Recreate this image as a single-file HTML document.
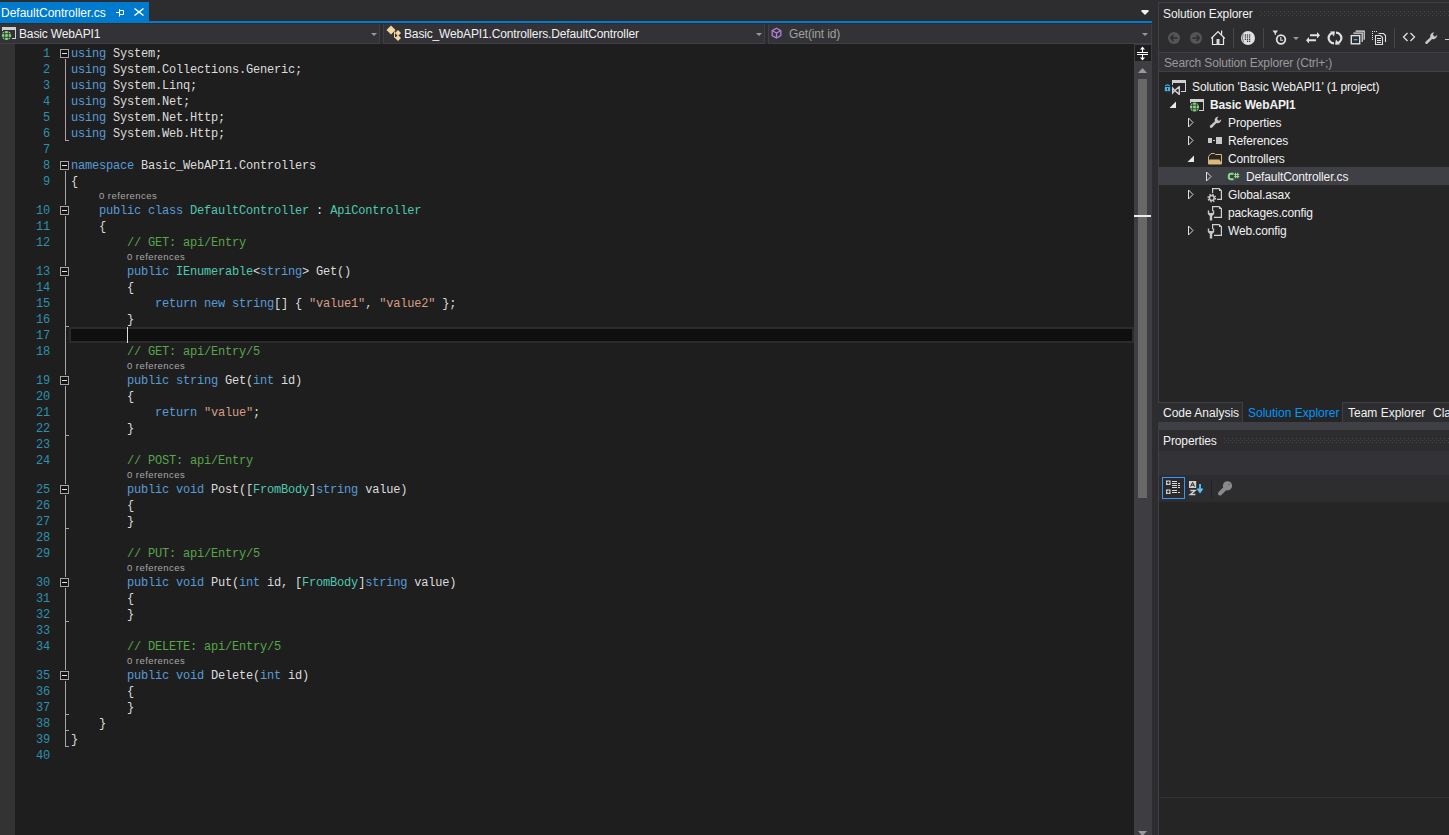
<!DOCTYPE html>
<html><head><meta charset="utf-8">
<style>
*{margin:0;padding:0;box-sizing:border-box}
html,body{width:1449px;height:835px;overflow:hidden;background:#2D2D30;font-family:"Liberation Sans",sans-serif;font-size:12px;color:#F1F1F1}
.abs{position:absolute}
b{font-weight:normal}
/* tab strip */
#tab{position:absolute;left:0;top:2px;width:149px;height:19px;background:#007ACC;color:#fff;font-size:12px;line-height:23px;padding-left:1px;white-space:nowrap}
#tabline{position:absolute;left:0;top:21px;width:1152px;height:2px;background:#007ACC}
/* nav bar */
#nav{position:absolute;left:0;top:23px;width:1152px;height:21px;background:#2D2D30}
.combo{position:absolute;top:1px;height:20px;background:#333337;border:1px solid #3F3F46;border-top-color:#333337;font-size:12px;letter-spacing:-0.15px;line-height:18px;color:#F1F1F1;white-space:nowrap}
.dd{position:absolute;top:8px;width:0;height:0;border-left:4px solid transparent;border-right:4px solid transparent;border-top:4px solid #999}
/* editor */
#editor{position:absolute;left:0;top:44px;width:1134px;height:791px;background:#1E1E1E}
#lmargin{position:absolute;left:0;top:44px;width:15px;height:791px;background:#333333}
.ln{position:absolute;left:20px;width:30px;text-align:right;height:16px;line-height:16px;margin-top:1px;font-family:"Liberation Mono",monospace;font-size:12px;letter-spacing:-0.2px;color:#2B91AF}
.cl{position:absolute;left:71px;height:16px;line-height:16px;margin-top:1px;font-family:"Liberation Mono",monospace;font-size:12px;letter-spacing:-0.2px;color:#DCDCDC;white-space:nowrap}
.lens{position:absolute;height:13px;line-height:13px;font-size:9.5px;letter-spacing:0.45px;color:#A8A8A8;white-space:nowrap;margin-top:0px}
.box{position:absolute;left:60px;width:9px;height:9px;border:1px solid #A5A5A5;background:#141414;box-shadow:0 0 0 1px #1E1E1E}
.box:after{content:"";position:absolute;left:1px;top:3px;width:5px;height:1px;background:#E0E0E0}
.vl{position:absolute;left:65px;width:1px;background:#A5A5A5}
.tick{position:absolute;left:65px;width:4px;height:1px;background:#A5A5A5}
#curline{position:absolute;left:69px;width:1065px;height:16px;border:2px solid #2B2B2B;background:#0F0F0F}
#caret{position:absolute;left:127px;width:1px;height:16px;background:#DCDCDC}
/* scrollbar */
#vscroll{position:absolute;left:1134px;top:44px;width:18px;height:791px;background:#3E3E42}
#split{position:absolute;left:1135px;top:45px;width:16px;height:16px;background:#1E1E1E}
#thumb{position:absolute;left:1138px;top:79px;width:9px;height:419px;background:#686868}
#marker{position:absolute;left:1134px;top:215px;width:17px;height:2px;background:#EEEEEE}
/* solution explorer */
#se{position:absolute;left:1158px;top:2px;width:291px;height:398px;background:#252526;border-left:1px solid #3F3F46;border-top:1px solid #3F3F46}
#sehead{position:absolute;left:1159px;top:3px;width:290px;height:22px;background:#2D2D30}
#setool{position:absolute;left:1159px;top:25px;width:290px;height:27px;background:#2D2D30}
#search{position:absolute;left:1159px;top:52px;width:290px;height:20px;background:#333337;border-top:1px solid #3F3F46;border-bottom:1px solid #3F3F46;color:#999;font-size:12px;line-height:20px;padding-left:5px;letter-spacing:-0.15px;white-space:nowrap}
.ttl{position:absolute;font-size:12px;letter-spacing:-0.1px;color:#F1F1F1;white-space:nowrap}
.grip{position:absolute;height:6px;background-image:radial-gradient(circle,#46464A 0.8px,transparent 0.9px);background-size:4px 4px}
.tree{position:absolute;height:18px;line-height:18px;font-size:12px;letter-spacing:-0.12px;color:#F1F1F1;white-space:nowrap}
#selrow{position:absolute;left:1159px;top:167px;width:290px;height:18px;background:#3F3F46}
/* bottom tabs */
#btabs{position:absolute;left:1158px;top:400px;width:291px;height:30px;background:#252526;border-left:1px solid #3F3F46}
.btab{position:absolute;top:403px;height:20px;line-height:20px;font-size:12px;color:#F1F1F1;white-space:nowrap}
/* properties */
#props{position:absolute;left:1158px;top:430px;width:291px;height:405px;background:#252526;border-left:1px solid #3F3F46}
#prophead{position:absolute;left:1159px;top:430px;width:290px;height:22px;background:#2D2D30}
#propcombo{position:absolute;left:1159px;top:451px;width:290px;height:24px;background:#333337}
#proptool{position:absolute;left:1159px;top:475px;width:290px;height:27px;background:#2D2D30}
</style></head><body>
<div id="tab">DefaultController.cs</div>
<div id="tabline"></div>
<div class="abs" style="left:1141px;top:10px;width:0;height:0;border-left:4px solid transparent;border-right:4px solid transparent;border-top:4px solid #F1F1F1"></div>

<div id="nav"></div>
<div class="combo" style="left:0;top:24px;width:380px;border-left:0"><span style="position:absolute;left:19px;top:0">Basic WebAPI1</span></div>
<div class="combo" style="left:383px;top:24px;width:382px"><span style="position:absolute;left:20px;top:0">Basic_WebAPI1.Controllers.DefaultController</span></div>
<div class="combo" style="left:768px;top:24px;width:384px"><span style="position:absolute;left:20px;top:0;color:#A0A0A0">Get(int id)</span></div>

<div id="editor"></div>
<div id="lmargin"></div>
<div id="curline" style="top:327px"></div>
<div id="caret" style="top:327px"></div>
<div class="vl" style="top:58px;height:83px"></div>
<div class="vl" style="top:170px;height:577px"></div>
<div class="tick" style="top:140px"></div>
<div class="tick" style="top:326px"></div>
<div class="tick" style="top:435px"></div>
<div class="tick" style="top:528px"></div>
<div class="tick" style="top:621px"></div>
<div class="tick" style="top:714px"></div>
<div class="tick" style="top:730px"></div>
<div class="tick" style="top:746px"></div>
<div class="box" style="top:49px"></div>
<div class="box" style="top:161px"></div>
<div class="box" style="top:206px"></div>
<div class="box" style="top:267px"></div>
<div class="box" style="top:376px"></div>
<div class="box" style="top:485px"></div>
<div class="box" style="top:578px"></div>
<div class="box" style="top:671px"></div>
<div class="ln" style="top:45px">1</div>
<div class="cl" style="top:45px"><b style="color:#569CD6">using</b> System;</div>
<div class="ln" style="top:61px">2</div>
<div class="cl" style="top:61px"><b style="color:#569CD6">using</b> System.Collections.Generic;</div>
<div class="ln" style="top:77px">3</div>
<div class="cl" style="top:77px"><b style="color:#569CD6">using</b> System.Linq;</div>
<div class="ln" style="top:93px">4</div>
<div class="cl" style="top:93px"><b style="color:#569CD6">using</b> System.Net;</div>
<div class="ln" style="top:109px">5</div>
<div class="cl" style="top:109px"><b style="color:#569CD6">using</b> System.Net.Http;</div>
<div class="ln" style="top:125px">6</div>
<div class="cl" style="top:125px"><b style="color:#569CD6">using</b> System.Web.Http;</div>
<div class="ln" style="top:141px">7</div>
<div class="ln" style="top:157px">8</div>
<div class="cl" style="top:157px"><b style="color:#569CD6">namespace</b> Basic_WebAPI1.Controllers</div>
<div class="ln" style="top:173px">9</div>
<div class="cl" style="top:173px">{</div>
<div class="lens" style="top:189px;left:99px">0 references</div>
<div class="ln" style="top:202px">10</div>
<div class="cl" style="top:202px">&nbsp;&nbsp;&nbsp;&nbsp;<b style="color:#569CD6">public</b> <b style="color:#569CD6">class</b> <b style="color:#4EC9B0">DefaultController</b> : <b style="color:#4EC9B0">ApiController</b></div>
<div class="ln" style="top:218px">11</div>
<div class="cl" style="top:218px">&nbsp;&nbsp;&nbsp;&nbsp;{</div>
<div class="ln" style="top:234px">12</div>
<div class="cl" style="top:234px">&nbsp;&nbsp;&nbsp;&nbsp;&nbsp;&nbsp;&nbsp;&nbsp;<b style="color:#57A64A">// GET: api/Entry</b></div>
<div class="lens" style="top:250px;left:127px">0 references</div>
<div class="ln" style="top:263px">13</div>
<div class="cl" style="top:263px">&nbsp;&nbsp;&nbsp;&nbsp;&nbsp;&nbsp;&nbsp;&nbsp;<b style="color:#569CD6">public</b> <b style="color:#4EC9B0">IEnumerable</b>&lt;<b style="color:#569CD6">string</b>&gt; Get()</div>
<div class="ln" style="top:279px">14</div>
<div class="cl" style="top:279px">&nbsp;&nbsp;&nbsp;&nbsp;&nbsp;&nbsp;&nbsp;&nbsp;{</div>
<div class="ln" style="top:295px">15</div>
<div class="cl" style="top:295px">&nbsp;&nbsp;&nbsp;&nbsp;&nbsp;&nbsp;&nbsp;&nbsp;&nbsp;&nbsp;&nbsp;&nbsp;<b style="color:#569CD6">return</b> <b style="color:#569CD6">new</b> <b style="color:#569CD6">string</b>[] { <b style="color:#D69D85">"value1"</b>, <b style="color:#D69D85">"value2"</b> };</div>
<div class="ln" style="top:311px">16</div>
<div class="cl" style="top:311px">&nbsp;&nbsp;&nbsp;&nbsp;&nbsp;&nbsp;&nbsp;&nbsp;}</div>
<div class="ln" style="top:327px">17</div>
<div class="ln" style="top:343px">18</div>
<div class="cl" style="top:343px">&nbsp;&nbsp;&nbsp;&nbsp;&nbsp;&nbsp;&nbsp;&nbsp;<b style="color:#57A64A">// GET: api/Entry/5</b></div>
<div class="lens" style="top:359px;left:127px">0 references</div>
<div class="ln" style="top:372px">19</div>
<div class="cl" style="top:372px">&nbsp;&nbsp;&nbsp;&nbsp;&nbsp;&nbsp;&nbsp;&nbsp;<b style="color:#569CD6">public</b> <b style="color:#569CD6">string</b> Get(<b style="color:#569CD6">int</b> id)</div>
<div class="ln" style="top:388px">20</div>
<div class="cl" style="top:388px">&nbsp;&nbsp;&nbsp;&nbsp;&nbsp;&nbsp;&nbsp;&nbsp;{</div>
<div class="ln" style="top:404px">21</div>
<div class="cl" style="top:404px">&nbsp;&nbsp;&nbsp;&nbsp;&nbsp;&nbsp;&nbsp;&nbsp;&nbsp;&nbsp;&nbsp;&nbsp;<b style="color:#569CD6">return</b> <b style="color:#D69D85">"value"</b>;</div>
<div class="ln" style="top:420px">22</div>
<div class="cl" style="top:420px">&nbsp;&nbsp;&nbsp;&nbsp;&nbsp;&nbsp;&nbsp;&nbsp;}</div>
<div class="ln" style="top:436px">23</div>
<div class="ln" style="top:452px">24</div>
<div class="cl" style="top:452px">&nbsp;&nbsp;&nbsp;&nbsp;&nbsp;&nbsp;&nbsp;&nbsp;<b style="color:#57A64A">// POST: api/Entry</b></div>
<div class="lens" style="top:468px;left:127px">0 references</div>
<div class="ln" style="top:481px">25</div>
<div class="cl" style="top:481px">&nbsp;&nbsp;&nbsp;&nbsp;&nbsp;&nbsp;&nbsp;&nbsp;<b style="color:#569CD6">public</b> <b style="color:#569CD6">void</b> Post([<b style="color:#4EC9B0">FromBody</b>]<b style="color:#569CD6">string</b> value)</div>
<div class="ln" style="top:497px">26</div>
<div class="cl" style="top:497px">&nbsp;&nbsp;&nbsp;&nbsp;&nbsp;&nbsp;&nbsp;&nbsp;{</div>
<div class="ln" style="top:513px">27</div>
<div class="cl" style="top:513px">&nbsp;&nbsp;&nbsp;&nbsp;&nbsp;&nbsp;&nbsp;&nbsp;}</div>
<div class="ln" style="top:529px">28</div>
<div class="ln" style="top:545px">29</div>
<div class="cl" style="top:545px">&nbsp;&nbsp;&nbsp;&nbsp;&nbsp;&nbsp;&nbsp;&nbsp;<b style="color:#57A64A">// PUT: api/Entry/5</b></div>
<div class="lens" style="top:561px;left:127px">0 references</div>
<div class="ln" style="top:574px">30</div>
<div class="cl" style="top:574px">&nbsp;&nbsp;&nbsp;&nbsp;&nbsp;&nbsp;&nbsp;&nbsp;<b style="color:#569CD6">public</b> <b style="color:#569CD6">void</b> Put(<b style="color:#569CD6">int</b> id, [<b style="color:#4EC9B0">FromBody</b>]<b style="color:#569CD6">string</b> value)</div>
<div class="ln" style="top:590px">31</div>
<div class="cl" style="top:590px">&nbsp;&nbsp;&nbsp;&nbsp;&nbsp;&nbsp;&nbsp;&nbsp;{</div>
<div class="ln" style="top:606px">32</div>
<div class="cl" style="top:606px">&nbsp;&nbsp;&nbsp;&nbsp;&nbsp;&nbsp;&nbsp;&nbsp;}</div>
<div class="ln" style="top:622px">33</div>
<div class="ln" style="top:638px">34</div>
<div class="cl" style="top:638px">&nbsp;&nbsp;&nbsp;&nbsp;&nbsp;&nbsp;&nbsp;&nbsp;<b style="color:#57A64A">// DELETE: api/Entry/5</b></div>
<div class="lens" style="top:654px;left:127px">0 references</div>
<div class="ln" style="top:667px">35</div>
<div class="cl" style="top:667px">&nbsp;&nbsp;&nbsp;&nbsp;&nbsp;&nbsp;&nbsp;&nbsp;<b style="color:#569CD6">public</b> <b style="color:#569CD6">void</b> Delete(<b style="color:#569CD6">int</b> id)</div>
<div class="ln" style="top:683px">36</div>
<div class="cl" style="top:683px">&nbsp;&nbsp;&nbsp;&nbsp;&nbsp;&nbsp;&nbsp;&nbsp;{</div>
<div class="ln" style="top:699px">37</div>
<div class="cl" style="top:699px">&nbsp;&nbsp;&nbsp;&nbsp;&nbsp;&nbsp;&nbsp;&nbsp;}</div>
<div class="ln" style="top:715px">38</div>
<div class="cl" style="top:715px">&nbsp;&nbsp;&nbsp;&nbsp;}</div>
<div class="ln" style="top:731px">39</div>
<div class="cl" style="top:731px">}</div>
<div class="ln" style="top:747px">40</div>

<div id="vscroll"></div>
<div id="split"></div>
<div id="thumb"></div>
<div id="marker"></div>

<div id="se"></div>
<div id="sehead"></div>
<div class="ttl" style="left:1163px;top:7px">Solution Explorer</div>
<div id="setool"></div>
<div id="search">Search Solution Explorer (Ctrl+;)</div>
<div id="selrow"></div>
<div class="tree" style="left:1192px;top:78px">Solution 'Basic WebAPI1' (1 project)</div>
<div class="tree" style="left:1210px;top:96px;font-weight:bold">Basic WebAPI1</div>
<div class="tree" style="left:1228px;top:114px">Properties</div>
<div class="tree" style="left:1228px;top:132px">References</div>
<div class="tree" style="left:1228px;top:150px">Controllers</div>
<div class="tree" style="left:1246px;top:168px">DefaultController.cs</div>
<div class="tree" style="left:1228px;top:186px">Global.asax</div>
<div class="tree" style="left:1228px;top:204px">packages.config</div>
<div class="tree" style="left:1228px;top:222px">Web.config</div>

<div id="btabs"></div>
<div class="abs" style="left:1158px;top:402px;width:85px;height:20px;background:#2D2D30;border-top:1px solid #3F3F46;border-right:1px solid #3F3F46"></div>
<div class="abs" style="left:1342px;top:402px;width:107px;height:20px;background:#2D2D30;border-top:1px solid #3F3F46;border-left:1px solid #3F3F46"></div>
<div class="abs" style="left:1158px;top:422px;width:291px;height:8px;background:#3F3F46"></div>
<div class="btab" style="left:1163px">Code Analysis</div>
<div class="btab" style="left:1248px;color:#0097FB">Solution Explorer</div>
<div class="btab" style="left:1348px">Team Explorer</div>
<div class="btab" style="left:1433px">Cla</div>

<div id="props"></div>
<div class="abs" style="left:1159px;top:797px;width:290px;height:1px;background:#333337"></div>
<div id="prophead"></div>
<div class="ttl" style="left:1163px;top:434px">Properties</div>
<div id="propcombo"></div>
<div id="proptool"></div>
<svg class="abs" style="left:0;top:0" width="1449" height="835" viewBox="0 0 1449 835" shape-rendering="geometricPrecision">
<!-- tab pin -->
<g fill="none" stroke="#FFFFFF" stroke-width="1">
<path d="M116 12.5H119.5M119.5 9V16.5M120 10.5H123.5V14.5H120"/>
</g>
<path d="M134.5 8.5L143.5 15.5M143.5 8.5L134.5 15.5" stroke="#FFFFFF" stroke-width="1.5" fill="none"/>
<!-- top right dropdown -->
<path d="M1141 11H1149L1145 15Z" fill="#F1F1F1"/>
<!-- combo arrows -->
<path d="M371 33H377L374 36Z" fill="#999999"/>
<path d="M756 33H762L759 36Z" fill="#999999"/>
<path d="M1142 33H1148L1145 36Z" fill="#999999"/>
<!-- project icon in combo -->
<g>
<rect x="2" y="27" width="14" height="3" fill="#D0D0D0"/>
<rect x="2" y="27" width="1" height="4" fill="#D0D0D0"/>
<rect x="15" y="27" width="1" height="12" fill="#D0D0D0"/>
<rect x="12" y="38" width="4" height="1" fill="#D0D0D0"/>
<circle cx="6.5" cy="35.5" r="5.1" fill="#333337"/><circle cx="6.5" cy="35.5" r="4.6" fill="#8DD48A"/>
<path d="M4.7 31.2V39.8M8.3 31.2V39.8M2.2 33.7H10.8M2.2 37.3H10.8" stroke="#263826" stroke-width="0.85"/>
</g>
<!-- class icon -->
<g fill="#F5D49F">
<path d="M391 25.5L395.5 30L391 34.5L386.5 30Z"/>
<path d="M398 30L401 33L398 36L395 33Z"/>
<path d="M398 35L401 38L398 41L395 38Z"/>
</g>
<path d="M394.5 31.5V37.5H396" stroke="#F5D49F" stroke-width="1" fill="none"/>
<!-- method cube -->
<g fill="none" stroke="#B180D7" stroke-width="1.3">
<path d="M776.5 28.2L780.8 30.6V35.6L776.5 38L772.2 35.6V30.6Z"/>
<path d="M772.6 30.8L776.5 33L780.4 30.8M776.5 33V37.6"/>
</g>
<!-- splitter -->
<g stroke="#FFFFFF" fill="none" stroke-width="1">
<path d="M1137 52.5H1148M1137 54.5H1148M1142.5 47.5V52M1142.5 55V60"/>
</g>
<path d="M1142.5 46.5L1140 49.5H1145Z M1142.5 60.5L1140 57.5H1145Z" fill="#FFFFFF"/>
<!-- scroll arrows -->
<path d="M1138 73H1147L1142.5 68Z" fill="#999999"/>
<path d="M1138 831H1147L1142.5 836Z" fill="#999999"/>
</svg>
<svg class="abs" style="left:0;top:0" width="1449" height="835" viewBox="0 0 1449 835">
<defs>
<pattern id="g1" x="0" y="3" width="4" height="4" patternUnits="userSpaceOnUse"><rect x="0" y="0" width="1" height="1" fill="#46464A"/><rect x="2" y="2" width="1" height="1" fill="#46464A"/></pattern>
<pattern id="g2" x="0" y="2" width="4" height="4" patternUnits="userSpaceOnUse"><rect x="0" y="0" width="1" height="1" fill="#46464A"/><rect x="2" y="2" width="1" height="1" fill="#46464A"/></pattern>
</defs>
<rect x="1260" y="11" width="189" height="5" fill="url(#g1)"/>
<rect x="1224" y="438" width="225" height="5" fill="url(#g2)"/>
<!-- SE toolbar -->
<circle cx="1174" cy="38" r="6" fill="#555555"/>
<path d="M1170.5 38H1177.5M1170.5 38L1173.5 35M1170.5 38L1173.5 41" stroke="#2D2D30" stroke-width="1.6" fill="none"/>
<circle cx="1196" cy="38" r="6" fill="#555555"/>
<path d="M1192.5 38H1199.5M1199.5 38L1196.5 35M1199.5 38L1196.5 41" stroke="#2D2D30" stroke-width="1.6" fill="none"/>
<g stroke="#E8E8E8" stroke-width="1.2" fill="none">
<path d="M1211.2 38.5L1218 31.5L1224.8 38.5M1212.5 37.5V44.5H1223.5V37.5M1221.6 30.5V34.5"/>
</g>
<rect x="1216.5" y="39" width="3" height="5.5" fill="#D8D8D8"/>
<rect x="1233" y="28" width="1" height="20" fill="#46464A"/>
<circle cx="1248" cy="38" r="7" fill="#E0E0E0"/>
<g fill="#2D2D30">
<circle cx="1245.4" cy="35" r="0.75"/><circle cx="1247.5" cy="35" r="0.75"/><circle cx="1249.6" cy="35" r="0.75"/>
<circle cx="1245.4" cy="37.1" r="0.75"/><circle cx="1247.5" cy="37.1" r="0.75"/><circle cx="1249.6" cy="37.1" r="0.75"/>
<circle cx="1245.4" cy="39.2" r="0.75"/><circle cx="1247.5" cy="39.2" r="0.75"/><circle cx="1249.6" cy="39.2" r="0.75"/>
<circle cx="1247.5" cy="41.3" r="0.75"/><circle cx="1249.6" cy="41.3" r="0.75"/>
</g>
<path d="M1243.2 33.5Q1241.7 38 1243.5 42.5" stroke="#2D2D30" stroke-width="0.6" fill="none"/>
<rect x="1263" y="28" width="1" height="20" fill="#46464A"/>
<path d="M1272.5 30.5H1278L1275.8 33.5V35H1274.8V33.5Z" fill="#E0E0E0"/>
<circle cx="1281" cy="39.5" r="4.3" stroke="#E0E0E0" stroke-width="1.8" fill="none"/>
<path d="M1280.8 37V40.2H1283" stroke="#E0E0E0" stroke-width="1.1" fill="none"/>
<path d="M1293 37H1299L1296 40Z" fill="#999999"/>
<g fill="#E0E0E0">
<path d="M1310 34.2H1317V32L1320 35.2L1317 38.4V36.2H1310Z"/>
<path d="M1316 39.2H1309V37L1306 40.2L1309 43.4V41.2H1316Z"/>
</g>
<g stroke="#E0E0E0" stroke-width="2.2" fill="none">
<path d="M1334 32.6A5.2 5.2 0 0 0 1334 43.4"/>
<path d="M1336 43.4A5.2 5.2 0 0 0 1336 32.6"/>
</g>
<path d="M1330 31.5L1335 31.5L1334 36.5Z M1340 44.5L1335 44.5L1336 39.5Z" fill="#E0E0E0"/>
<g stroke="#E0E0E0" fill="none" stroke-width="1.2">
<rect x="1351.3" y="35.6" width="8.4" height="8.2" stroke-width="1.4"/>
<path d="M1353.4 33.2H1362.2V42M1355.6 31.2H1364.2V39.8"/>
</g>
<rect x="1353.8" y="39" width="3.6" height="1.3" fill="#55AAFF"/>
<g fill="#E0E0E0">
<rect x="1372" y="31" width="1" height="1"/><rect x="1374" y="31" width="1" height="1"/><rect x="1376" y="31" width="1" height="1"/>
<rect x="1372" y="33" width="1" height="1"/><rect x="1372" y="35" width="1" height="1"/><rect x="1372" y="37" width="1" height="1"/><rect x="1372" y="39" width="1" height="1"/>
</g>
<g stroke="#E0E0E0" fill="none" stroke-width="1.1">
<path d="M1375.5 35.5H1380.5L1382.5 37.5V44.5H1375.5Z"/>
<path d="M1378.5 33.5H1383.5L1385.5 35.5V42"/>
<path d="M1377 38.5H1381M1377 40.5H1381M1377 42.5H1381"/>
</g>
<rect x="1394" y="28" width="1" height="20" fill="#46464A"/>
<path d="M1407.5 33L1403.5 37L1407.5 41M1410.5 33L1414.5 37L1410.5 41" stroke="#E0E0E0" stroke-width="1.3" fill="none"/>
<path d="M1434.2 32.2A4 4 0 0 0 1430.3 37.2L1425.6 41.7A1.3 1.3 0 0 0 1427.6 43.6L1432.1 39A4 4 0 0 0 1437.2 35L1434.8 36.8L1432.8 34.8Z" fill="#C8C8C8"/>
<rect x="1445" y="39" width="4" height="1" fill="#C8C8C8"/>

<!-- tree icons -->
<!-- solution row -->
<path d="M1165.3 86.2Q1167.5 83.4 1169.7 86.2" stroke="#3BB4F0" stroke-width="1.3" fill="none"/>
<rect x="1164.8" y="87" width="5.4" height="4.2" fill="#3BB4F0"/>
<rect x="1167" y="88" width="1" height="2.2" fill="#252526"/>
<g fill="#D0D0D0">
<rect x="1172" y="80" width="14" height="3"/>
<rect x="1172" y="80" width="1" height="6"/>
<rect x="1185" y="80" width="1" height="12"/>
<rect x="1181" y="91" width="5" height="1"/>
</g>
<rect x="1171" y="85" width="10" height="10" fill="#252526"/>
<path d="M1172.6 88L1174.8 90.5L1172.6 93Z" stroke="#D0D0D0" stroke-width="1.3" fill="none"/>
<path d="M1174.8 90.5L1179.3 86.6V94.4Z" stroke="#D0D0D0" stroke-width="1.4" fill="none" stroke-linejoin="round"/>
<!-- project row -->
<path d="M1176 101.5V108H1169.5Z" fill="#E8E8E8"/>
<g fill="#D0D0D0">
<rect x="1190" y="99" width="14" height="3"/>
<rect x="1190" y="99" width="1" height="4"/>
<rect x="1203" y="99" width="1" height="12"/>
<rect x="1199" y="110" width="5" height="1"/>
</g>
<circle cx="1194.5" cy="107" r="5" fill="#252526"/><circle cx="1194.5" cy="107" r="4.5" fill="#8DD48A"/>
<path d="M1192.7 102.8V111.2M1196.3 102.8V111.2M1190.3 105.2H1198.7M1190.3 108.8H1198.7" stroke="#263826" stroke-width="0.85"/>
<!-- expanders collapsed -->
<g stroke="#E0E0E0" stroke-width="1" fill="none">
<path d="M1188.5 118V127L1193 122.5Z"/>
<path d="M1188.5 136V145L1193 140.5Z"/>
<path d="M1206.5 172V181L1211 176.5Z"/>
<path d="M1188.5 190V199L1193 194.5Z"/>
<path d="M1188.5 226V235L1193 230.5Z"/>
</g>
<path d="M1194 155.5V162H1187.5Z" fill="#E8E8E8"/>
<!-- properties wrench -->
<path d="M1218.5 116.5A3.8 3.8 0 0 0 1214.8 121.4L1210.2 125.6A1.3 1.3 0 0 0 1212.2 127.6L1216.4 123A3.8 3.8 0 0 0 1221.3 119.3L1219 121L1217 119Z" fill="#C8C8C8"/>
<!-- references -->
<rect x="1208" y="138" width="4" height="5" fill="#C8C8C8"/>
<rect x="1213" y="140" width="2" height="1" fill="#C8C8C8"/>
<rect x="1216" y="137" width="6" height="7" fill="#C8C8C8"/>
<!-- folder -->
<path d="M1208.5 164V156.5L1211 153.5H1214.5L1215.5 154.5H1221.5V164Z" stroke="#DCB67A" stroke-width="1" fill="none"/>
<path d="M1208 164L1209.5 159.5H1219.5L1222 164Z" fill="#DCB67A"/>
<!-- C# -->
<path d="M1233.6 173.8H1230.6A2 2 0 0 0 1228.8 175.6V177.4A2 2 0 0 0 1230.6 179.2H1233.6" stroke="#8BDE8B" stroke-width="2" fill="none"/>
<path d="M1235.5 172.8V178.2M1237.7 172.8V178.2M1234.2 174.5H1239.2M1234.2 176.6H1239.2" stroke="#8BDE8B" stroke-width="1.1" fill="none"/>
<!-- page icons -->
<path d="M1212.6 193V188.6H1219.2L1221.4 190.8V199.4H1217" stroke="#D0D0D0" stroke-width="1.2" fill="none"/>
<path d="M1219 188.6L1221.4 191H1219Z" fill="#D0D0D0"/>
<path d="M1212.6 211V206.6H1219.2L1221.4 208.8V217.4H1214" stroke="#D0D0D0" stroke-width="1.2" fill="none"/>
<path d="M1219 206.6L1221.4 209H1219Z" fill="#D0D0D0"/>
<path d="M1212.6 229V224.6H1219.2L1221.4 226.8V235.4H1214" stroke="#D0D0D0" stroke-width="1.2" fill="none"/>
<path d="M1219 224.6L1221.4 227H1219Z" fill="#D0D0D0"/>
<circle cx="1211.8" cy="198" r="3.6" stroke="#C8C8C8" stroke-width="1.6" stroke-dasharray="1.4 1.43" fill="none"/>
<circle cx="1211.8" cy="198" r="2.4" stroke="#C8C8C8" stroke-width="1.5" fill="none"/>
<path d="M1207.8 210.5V214L1209.8 216V220.5H1212.2V216L1214.2 214V210.5H1212.8V213H1209.2V210.5Z" fill="#C8C8C8"/>
<path d="M1207.8 228.5V232L1209.8 234V238.5H1212.2V234L1214.2 232V228.5H1212.8V231H1209.2V228.5Z" fill="#C8C8C8"/>
<!-- properties toolbar -->
<rect x="1162.5" y="477.5" width="22" height="21" stroke="#3399FF" stroke-width="1" fill="#2A2A2C"/>
<g fill="#D8D8D8">
<rect x="1166" y="480.5" width="4.5" height="4.5"/>
<rect x="1166" y="489.5" width="4.5" height="4.5"/>
<rect x="1172" y="481" width="5" height="1"/><rect x="1172" y="483" width="5" height="1"/><rect x="1172" y="485" width="5" height="1"/><rect x="1172" y="487" width="5" height="1"/>
<rect x="1172" y="490" width="5" height="1"/><rect x="1172" y="492" width="5" height="1"/>
<rect x="1178" y="483" width="2" height="1"/><rect x="1178" y="485" width="2" height="1"/><rect x="1178" y="487" width="2" height="1"/><rect x="1178" y="492" width="2" height="1"/>
</g>
<path d="M1166.7 482.75H1169.8M1168.25 481.2V484.3M1166.7 491.75H1169.8M1168.25 490.2V493.3" stroke="#2A2A2C" stroke-width="1.1"/>
<rect x="1189" y="481" width="7.2" height="7" fill="#D0D0D0"/>
<path d="M1190.6 486.6L1192.6 482.4L1194.6 486.6M1191.3 485.2H1193.9" stroke="#2D2D30" stroke-width="1" fill="none"/>
<path d="M1190.3 490.5H1195.2L1190.3 494.5H1195.4" stroke="#D0D0D0" stroke-width="1.4" fill="none"/>
<path d="M1200 484V491.5M1197.5 488.5L1200 492L1202.5 488.5" stroke="#55C8FA" stroke-width="1.8" fill="none"/>
<rect x="1211" y="479" width="1" height="20" fill="#222224"/>
<circle cx="1227.5" cy="485.8" r="4.6" fill="#8A8A8A"/>
<path d="M1225.5 488L1220 493.5" stroke="#8A8A8A" stroke-width="4" stroke-linecap="round"/>
<circle cx="1229" cy="484.5" r="1.2" fill="#777777"/>
</svg>

</body></html>
